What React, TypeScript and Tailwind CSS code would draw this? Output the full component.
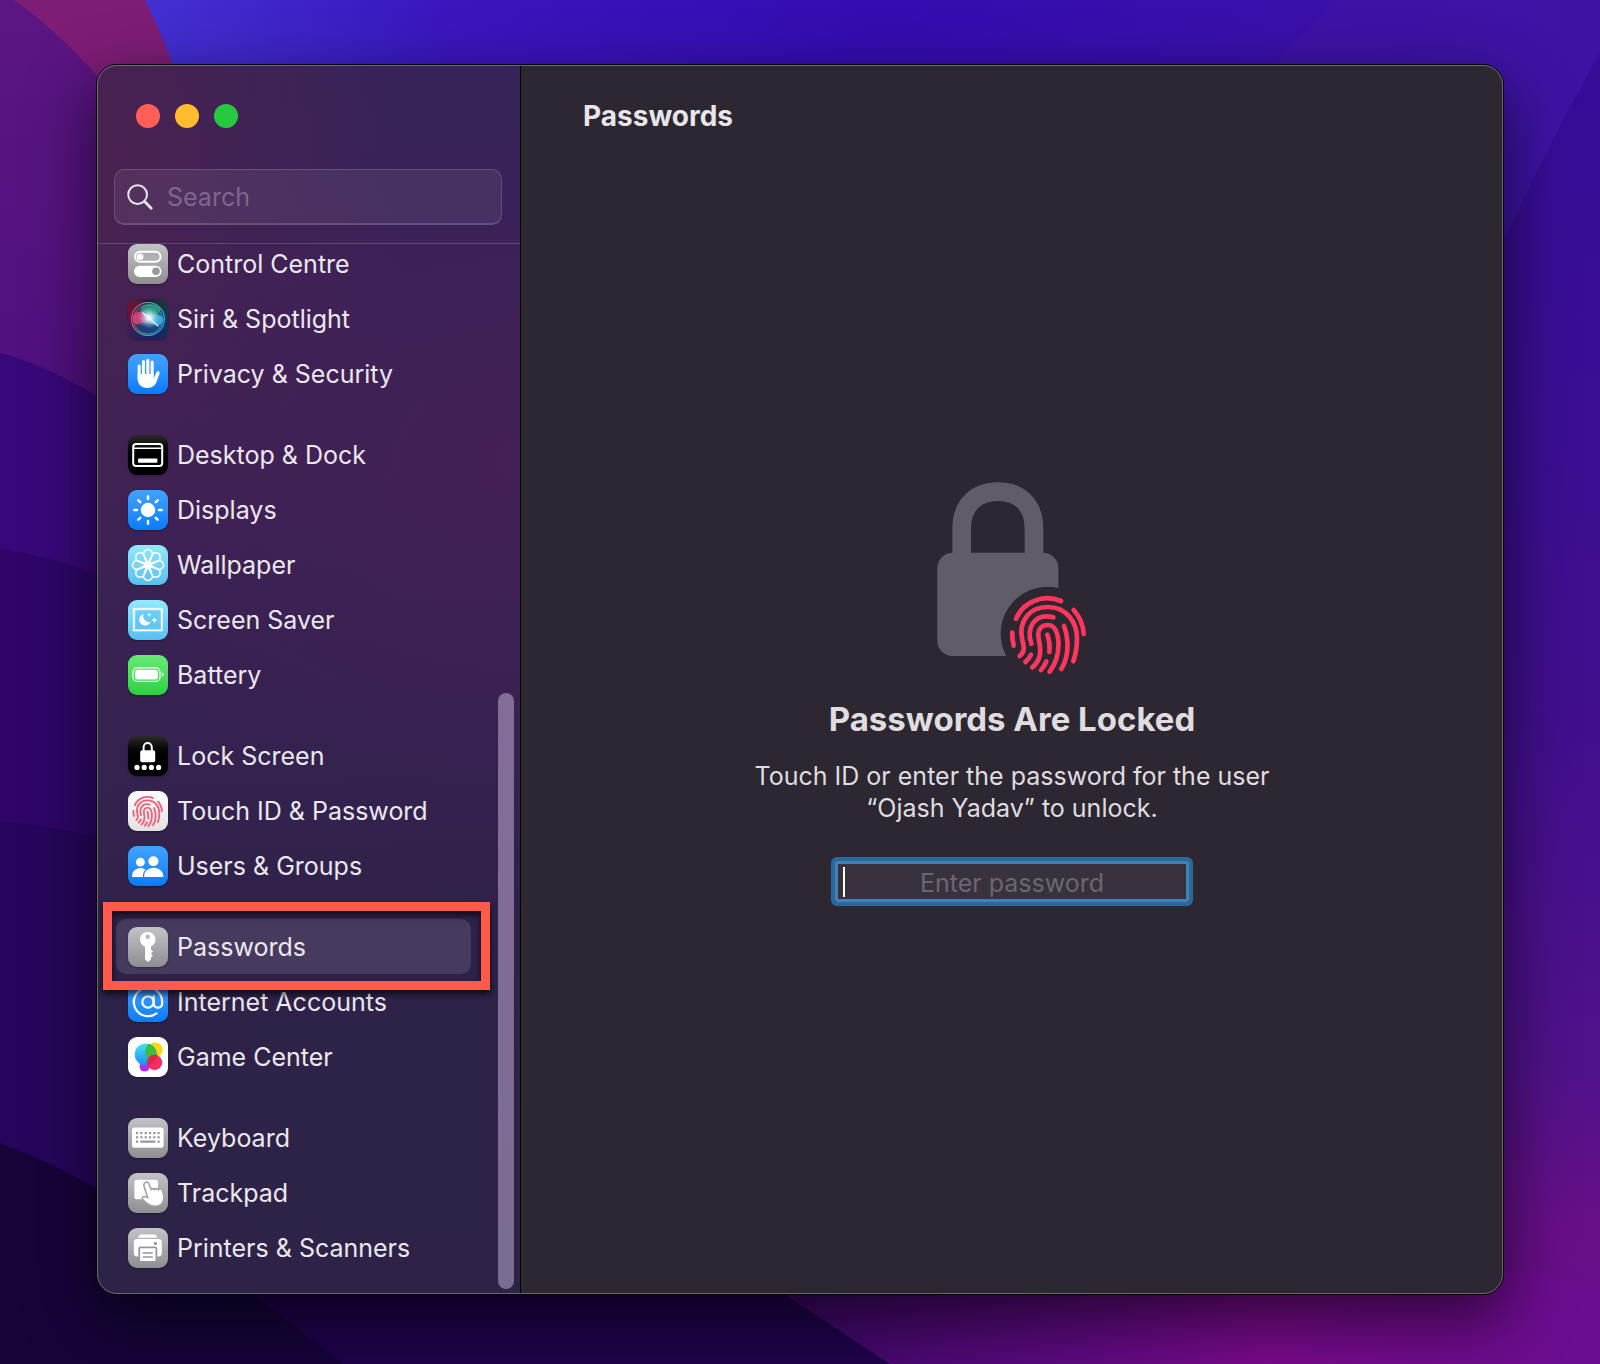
import type { ReactNode } from "react";
import { AtSign } from "lucide-react";

const FINGERPRINT = [
  "M349 475 C372 424 430 400 484 422",
  "M522 449 Q550 480 552 521",
  "M338 517 Q337 537 342 556",
  "M360 587 C376 574 374 560 368 540 C354 480 392 440 444 440 C500 440 532 485 532 535 C532 560 528 582 521 603",
  "M395 550 C380 505 402 456 461 471",
  "M377 605 Q388 597 394 583",
  "M398 621 C425 600 425 570 417 535 C411 505 428 494 444 494 C465 494 473 513 476 540 C479 580 468 610 450 634",
  "M443 523 Q452 548 449 575",
  "M424 629 Q434 618 440 603",
  "M493 497 C509 540 507 590 485 626",
];

function Fingerprint() {
  return (
    <>
      {FINGERPRINT.map((d) => (
        <path key={d} d={d} fill="none" strokeLinecap="round" />
      ))}
    </>
  );
}

const TILE = {
  gray: "bg-linear-to-b from-[#c3c3c7] to-[#8e8e93]",
  blue: "bg-linear-to-b from-[#41a3ff] to-[#077cff]",
  black: "bg-linear-to-b from-[#2c2c2c] to-black to-60%",
  sky: "bg-linear-to-b from-[#91eafd] to-[#56bff0]",
  green: "bg-linear-to-b from-[#66ea76] to-[#2bd041]",
  white: "bg-linear-to-b from-white to-[#e2e2e2]",
  plain: "bg-white",
  siri: "bg-linear-to-r from-[#7a0b33] via-[#2a1a3c] to-[#0b3f3f]",
};

function Tile({ tone, children }: { tone: keyof typeof TILE; children: ReactNode }) {
  return (
    <span className={`flex size-10 shrink-0 items-center justify-center overflow-hidden rounded-[9px] shadow-[0_1px_2px_rgba(0,0,0,0.35)] ${TILE[tone]}`}>
      <svg viewBox="0 0 40 40" className="size-10" fill="none" aria-hidden="true">
        {children}
      </svg>
    </span>
  );
}

const ControlCentreIcon = () => (
  <Tile tone="gray">
    <rect x="7" y="7.8" width="25.5" height="10" rx="5" stroke="#fff" strokeWidth="2" fill="#b0b0b4" />
    <circle cx="12" cy="12.8" r="3.4" fill="#fff" />
    <rect x="6" y="21.8" width="27.5" height="11.2" rx="5.6" fill="#fff" />
    <circle cx="28" cy="27.3" r="3.8" fill="#98989c" />
  </Tile>
);

const SiriIcon = () => (
  <Tile tone="siri">
    <defs>
      <radialGradient id="siri-orb" cx="0.5" cy="0.5" r="0.5">
        <stop offset="0" stopColor="#fff" />
        <stop offset="0.25" stopColor="#d9f3fb" stopOpacity="0.9" />
        <stop offset="1" stopColor="#8bd" stopOpacity="0" />
      </radialGradient>
      <linearGradient id="siri-ring" x1="0" y1="0.4" x2="1" y2="0.7">
        <stop offset="0" stopColor="#d0507a" />
        <stop offset="0.4" stopColor="#4fb596" />
        <stop offset="1" stopColor="#2a9fe8" />
      </linearGradient>
      <linearGradient id="siri-base" x1="0" y1="0" x2="0" y2="1">
        <stop offset="0.3" stopColor="#0d2a86" stopOpacity="0" />
        <stop offset="1" stopColor="#12246e" stopOpacity="0.8" />
      </linearGradient>
      <radialGradient id="siri-globe" cx="0.62" cy="0.5" r="0.65">
        <stop offset="0" stopColor="#1f8a78" />
        <stop offset="0.6" stopColor="#1a4a66" />
        <stop offset="1" stopColor="#4a2050" />
      </radialGradient>
    </defs>
    <rect width="40" height="40" fill="url(#siri-base)" />
    <circle cx="20" cy="20" r="16" fill="url(#siri-globe)" />
    <ellipse cx="22.5" cy="11" rx="10" ry="6" fill="#1fae78" fillOpacity="0.7" />
    <ellipse cx="12.5" cy="19.5" rx="8" ry="7" fill="#e0407a" fillOpacity="0.9" />
    <ellipse cx="28" cy="21" rx="7.5" ry="5.5" fill="#3fb0ec" fillOpacity="0.9" />
    <path d="M8 26 C16 21 24 26 33 27 C28 36 13 37 8 26Z" fill="#1c3c86" fillOpacity="0.7" />
    <circle cx="21" cy="18.5" r="11" fill="url(#siri-orb)" />
    <path d="M15 14 L30 27" stroke="#fff" strokeWidth="1.6" strokeOpacity="0.75" strokeLinecap="round" />
    <circle cx="20" cy="20" r="16.5" stroke="url(#siri-ring)" strokeWidth="1.2" />
    <circle cx="20" cy="20.5" r="14.5" stroke="url(#siri-ring)" strokeWidth="0.8" />
  </Tile>
);

const HandIcon = () => (
  <Tile tone="blue">
    <g stroke="#fff" strokeLinecap="round" strokeWidth="3.1">
      <path d="M11.2 12 V25" />
      <path d="M15.5 7.6 V22" />
      <path d="M19.8 6.4 V22" />
      <path d="M24.1 8 V22" />
    </g>
    <path d="M9.7 20 H25.6 V24.5 L28.3 18.4 C29 16.7 32.3 16.6 31.6 19.4 L28.6 27.6 C27.2 31.7 24.2 34 19.4 34 C13.3 34 9.7 30.6 9.7 24.5 Z" fill="#fff" />
  </Tile>
);

const DesktopIcon = () => (
  <Tile tone="black">
    <rect x="5.2" y="9" width="29" height="22" rx="3" stroke="#fff" strokeWidth="2" />
    <path d="M5 13.3 H34" stroke="#fff" strokeWidth="1.4" />
    <rect x="10" y="23.4" width="19.4" height="4.4" rx="1" fill="#fff" />
  </Tile>
);

const RAYS = [0, 45, 90, 135, 180, 225, 270, 315];

const DisplaysIcon = () => (
  <Tile tone="blue">
    <circle cx="20" cy="20" r="7.2" fill="#fff" />
    {RAYS.map((a) => (
      <path key={a} d="M20 9 V6.2" stroke="#fff" strokeWidth="2.4" strokeLinecap="round" transform={`rotate(${a} 20 20)`} />
    ))}
  </Tile>
);

const WallpaperIcon = () => (
  <Tile tone="sky">
    {RAYS.map((a) => (
      <path key={a} d="M20 22.5 L16.2 11.2 A4.4 4.4 0 1 1 23.8 11.2 Z" stroke="#fff" strokeWidth="1.5" strokeLinejoin="round" transform={`rotate(${a} 20 20)`} />
    ))}
  </Tile>
);

const ScreenSaverIcon = () => (
  <Tile tone="sky">
    <rect x="5.8" y="8.8" width="28" height="21.6" stroke="#fff" strokeWidth="1.8" />
    <rect x="8" y="11" width="23.6" height="17.2" fill="#55bff0" fillOpacity="0.5" />
    <path d="M15.6 14 A5.9 5.9 0 1 0 22.6 22 A6 6 0 0 1 15.6 14Z" fill="#fff" />
    <path d="M26.3 17 L27.2 19.3 L29.5 20.2 L27.2 21.1 L26.3 23.4 L25.4 21.1 L23.1 20.2 L25.4 19.3Z" fill="#fff" />
    <path d="M21.3 12.6 L21.9 14.2 L23.5 14.8 L21.9 15.4 L21.3 17 L20.7 15.4 L19.1 14.8 L20.7 14.2Z" fill="#fff" />
  </Tile>
);

const BatteryIcon = () => (
  <Tile tone="green">
    <rect x="5" y="12.8" width="27" height="13.6" rx="4.4" stroke="#fff" strokeOpacity="0.85" strokeWidth="1.4" />
    <rect x="7" y="14.8" width="23" height="9.6" rx="2.6" fill="#fff" />
    <path d="M33.8 17.2 C36.4 18.2 36.4 21 33.8 22Z" fill="#fff" fillOpacity="0.85" />
  </Tile>
);

const LockScreenIcon = () => (
  <Tile tone="black">
    <rect x="12.2" y="14.2" width="15" height="12" rx="2" fill="#fff" />
    <path d="M15.6 15 V11.4 C15.6 5.6 23.8 5.6 23.8 11.4 V15" stroke="#fff" strokeWidth="2" />
    {[9, 16.2, 23.4, 30.6].map((x) => (
      <circle key={x} cx={x} cy="31.4" r="2.6" fill="#fff" />
    ))}
  </Tile>
);

const TouchIdIcon = () => (
  <Tile tone="white">
    <g transform="translate(-39.8 -49.4) scale(0.1337)" stroke="#f4607c" strokeWidth="14">
      <Fingerprint />
    </g>
  </Tile>
);

const UsersIcon = () => (
  <Tile tone="blue">
    <circle cx="12.4" cy="16.2" r="4.4" fill="#fff" />
    <path d="M4 31 C3.6 25.5 8 22 12.4 22 C14.6 22 16.4 22.6 17.7 23.6 C15.6 25.4 14.7 28 15 31Z" fill="#fff" />
    <circle cx="25.4" cy="15.2" r="5" fill="#fff" />
    <path d="M16.2 31 C15.6 25.3 20.4 21.8 25.6 21.8 C30.8 21.8 35.8 25.3 35.2 31Z" fill="#fff" />
  </Tile>
);

const KeyIcon = () => (
  <Tile tone="gray">
    <path fillRule="evenodd" d="M19.7 5 C24.3 5 27.5 8.3 27.5 12.6 C27.5 15.8 25.6 18.4 23 19.6 V22.4 L25 24.2 L23 26.4 L24.8 28.6 L23 30.6 V32.2 L20 35 L17 32.2 V19.8 C13.8 18.6 12 15.8 12 12.6 C12 8.3 15.2 5 19.7 5Z M19.7 7.6 A2.2 2.2 0 1 0 19.7 12 A2.2 2.2 0 1 0 19.7 7.6Z" fill="#fff" />
  </Tile>
);

const InternetIcon = () => (
  <Tile tone="blue">
    <AtSign x="3" y="3" width="34" height="34" color="#fff" strokeWidth={1.6} />
  </Tile>
);

const GameCenterIcon = () => (
  <Tile tone="plain">
    <defs>
      <linearGradient id="gc-cyan" x1="0" y1="0" x2="0" y2="1">
        <stop offset="0" stopColor="#4ce1f5" />
        <stop offset="1" stopColor="#1b8df0" />
      </linearGradient>
      <clipPath id="gc-clip">
        <circle cx="17.8" cy="17.4" r="11" />
      </clipPath>
    </defs>
    <circle cx="16.6" cy="29.6" r="5" fill="#b02df5" />
    <circle cx="27.2" cy="12.8" r="7.4" fill="#fbd70e" />
    <circle cx="17.8" cy="17.4" r="11" fill="url(#gc-cyan)" />
    <ellipse cx="25" cy="14.8" rx="8" ry="9.4" fill="#3dbb45" clipPath="url(#gc-clip)" />
    <circle cx="26.6" cy="25.4" r="7.7" fill="#fb2b63" />
    <circle cx="26.6" cy="25.4" r="7.7" fill="#d9273a" fillOpacity="0.75" clipPath="url(#gc-clip)" />
  </Tile>
);

const KeyboardIcon = () => (
  <Tile tone="gray">
    <rect x="4" y="9.6" width="31.6" height="20.2" rx="2.4" fill="#fff" />
    {[14, 18.2].map((y) =>
      [8, 12.3, 16.6, 20.9, 25.2, 29.5].map((x) => <rect key={`${x}-${y}`} x={x} y={y} width="2.2" height="2.2" fill="#98989c" />),
    )}
    <path d="M8 23.6 H10.2 M12.3 23.6 H27.4 M29.5 23.6 H31.7" stroke="#98989c" strokeWidth="2.2" />
  </Tile>
);

const TrackpadIcon = () => (
  <Tile tone="gray">
    <rect x="6.4" y="6.8" width="23.6" height="19.4" rx="2" fill="#fff" />
    <path
      d="M17.3 9.6 C18.7 8.6 20.4 9.3 21 11 L23.2 16.4 C24 15.2 25.8 15.4 26.5 16.6 C27.5 15.2 29.6 15.4 30.2 16.8 C31.3 15 34 15.2 34.4 17.6 C35.6 21 36.4 24.8 35.2 28 C33.8 31.8 30.2 33.6 26 33.2 C21.4 32.8 17.4 29.6 14.7 26.6 C13.4 25.2 14.8 23.2 16.6 23.6 L19.6 24.6 L16 13 C15.6 11.4 16 10.4 17.3 9.6Z"
      fill="#fff"
      stroke="#a2a2a6"
      strokeWidth="1.6"
    />
  </Tile>
);

const PrinterIcon = () => (
  <Tile tone="gray">
    <path d="M10.4 9.8 C10.4 7.8 11.6 6.6 13.4 6.6 H26 C27.8 6.6 29 7.8 29 9.8Z" fill="#fff" />
    <path d="M9.4 11 H30.2 C32.6 11 33.8 12.2 33.8 14.4 V25 C33.8 27.4 32.8 28.4 30.4 28.4 H9.2 C6.8 28.4 5.8 27.4 5.8 25 V14.4 C5.8 12.2 7 11 9.4 11Z" fill="#fff" />
    <circle cx="27.4" cy="15.4" r="1.6" fill="#98989c" />
    <rect x="11.2" y="19.4" width="17.2" height="14.6" rx="1.4" fill="#fff" stroke="#98989c" strokeWidth="1.8" />
    <path d="M14.8 25 H24.8 M14.8 29 H24.8" stroke="#98989c" strokeWidth="1.6" />
  </Tile>
);

type Item = { label: string; icon: ReactNode; selected?: boolean };

const GROUPS: Item[][] = [
  [
    { label: "Control Centre", icon: <ControlCentreIcon /> },
    { label: "Siri & Spotlight", icon: <SiriIcon /> },
    { label: "Privacy & Security", icon: <HandIcon /> },
  ],
  [
    { label: "Desktop & Dock", icon: <DesktopIcon /> },
    { label: "Displays", icon: <DisplaysIcon /> },
    { label: "Wallpaper", icon: <WallpaperIcon /> },
    { label: "Screen Saver", icon: <ScreenSaverIcon /> },
    { label: "Battery", icon: <BatteryIcon /> },
  ],
  [
    { label: "Lock Screen", icon: <LockScreenIcon /> },
    { label: "Touch ID & Password", icon: <TouchIdIcon /> },
    { label: "Users & Groups", icon: <UsersIcon /> },
  ],
  [
    { label: "Passwords", icon: <KeyIcon />, selected: true },
    { label: "Internet Accounts", icon: <InternetIcon /> },
    { label: "Game Center", icon: <GameCenterIcon /> },
  ],
  [
    { label: "Keyboard", icon: <KeyboardIcon /> },
    { label: "Trackpad", icon: <TrackpadIcon /> },
    { label: "Printers & Scanners", icon: <PrinterIcon /> },
  ],
];

function SidebarItem({ label, icon, selected }: Item) {
  return (
    <li className="relative">
      <button
        type="button"
        aria-current={selected ? "page" : undefined}
        className={`flex h-[55px] w-full items-center gap-[9px] rounded-[10px] px-3 text-left text-[25px] text-[#ebe8ee] ${selected ? "bg-[#463a5e]" : ""}`}
      >
        {icon}
        <span className="pt-0.5 whitespace-nowrap">{label}</span>
      </button>
      {selected && (
        <div className="pointer-events-none absolute -top-[17px] -right-[19px] -bottom-4 -left-[13px] z-10 border-[9px] border-[#ff5a4a] drop-shadow-[0_4px_3px_rgba(0,0,0,0.7)]" />
      )}
    </li>
  );
}

function Sidebar() {
  return (
    <aside className="relative flex w-[424px] shrink-0 flex-col border-r border-black bg-[radial-gradient(ellipse_320px_460px_at_0%_8%,#4a2250_0%,transparent_100%),radial-gradient(ellipse_460px_340px_at_100%_32%,#432055_0%,transparent_100%),linear-gradient(178deg,#352359_0%,#38225a_20%,#3b2256_36%,#352250_55%,#2e2248_72%,#2e2347_100%)]">
      <div className="flex gap-[15px] px-[39px] pt-[39px]">
        <button type="button" aria-label="Close" className="size-6 rounded-full bg-[#ff5f57]" />
        <button type="button" aria-label="Minimise" className="size-6 rounded-full bg-[#febc2e]" />
        <button type="button" aria-label="Zoom" className="size-6 rounded-full bg-[#28c840]" />
      </div>
      <div className="border-b border-[#61467a] pt-[41px] pr-[18px] pb-[18px] pl-[17px]">
        <label className="flex h-14 items-center gap-[14px] rounded-[10px] border border-b-2 border-white/15 bg-white/[0.07] px-3">
          <svg viewBox="0 0 26 26" className="size-[26px] shrink-0" fill="none" stroke="#e8e4ec" strokeLinecap="round" aria-hidden="true">
            <circle cx="10.6" cy="10.6" r="9.4" strokeWidth="2" />
            <path d="M17.6 17.6 L24.2 24.2" strokeWidth="2.8" />
          </svg>
          <input
            type="search"
            aria-label="Search"
            placeholder="Search"
            className="w-full min-w-0 bg-transparent pt-0.5 text-[25px] text-[#ebe8ee] outline-none placeholder:text-[#80668e]"
          />
        </label>
      </div>
      <nav aria-label="Settings" className="-mt-2 flex flex-col gap-[26px] pr-[49px] pb-[19px] pl-[19px]">
        {GROUPS.map((group) => (
          <ul key={group[0].label}>
            {group.map((item) => (
              <SidebarItem key={item.label} {...item} />
            ))}
          </ul>
        ))}
      </nav>
      <div className="absolute right-1.5 bottom-[5px] h-[596px] w-4 rounded-full bg-linear-to-b from-[#846c99] to-[#7a6c93]" />
    </aside>
  );
}

function LockedIllustration() {
  return (
    <svg viewBox="112 65 450 576" className="h-48 w-[150px]" aria-hidden="true">
      <defs>
        <mask id="badge-cutout" maskUnits="userSpaceOnUse" x="0" y="0" width="700" height="700">
          <rect width="700" height="700" fill="#fff" />
          <circle cx="444" cy="520" r="141" fill="#000" />
        </mask>
      </defs>
      <g mask="url(#badge-cutout)">
        <path d="M186 290 V205 C186 132 232 94 295 94 S403 132 403 205 V290" fill="none" stroke="#615d67" strokeWidth="56" />
        <rect x="113" y="277" width="363" height="310" rx="46" fill="#615d67" />
      </g>
      <g stroke="#ff375f" strokeWidth="14">
        <Fingerprint />
      </g>
    </svg>
  );
}

function PasswordsPane() {
  return (
    <main className="flex flex-1 flex-col bg-[#2d2731]">
      <h1 className="px-[62px] pt-[33px] text-[28px] leading-9 font-bold text-[#e8e6e9]">Passwords</h1>
      <section className="flex flex-1 flex-col items-center pt-[348px] text-center text-[#dfdde0]">
        <LockedIllustration />
        <h2 className="mt-[25px] text-[33px] leading-10 font-bold">Passwords Are Locked</h2>
        <p className="mt-[21px] text-[25px] leading-8">
          Touch ID or enter the password for the user
          <br />
          “Ojash Yadav” to unlock.
        </p>
        <div className="relative mt-[33px] w-[362px]">
          <input
            type="password"
            aria-label="Enter password"
            placeholder="Enter password"
            className="block h-[49px] w-full rounded-md border-4 border-[#2a699c] bg-[#39323c] pt-0.5 text-center text-[25px] text-white shadow-[inset_0_0_0_3px_#4380b5] outline-none placeholder:text-[#6b6770]"
          />
          <span className="absolute top-[10px] left-3 h-[30px] w-0.5 bg-white" />
        </div>
      </section>
    </main>
  );
}

function Wallpaper() {
  return (
    <svg viewBox="0 0 1600 1364" preserveAspectRatio="none" className="absolute inset-0 size-full" aria-hidden="true">
      <defs>
        <linearGradient id="wp-blue" x1="0" y1="0" x2="1" y2="0">
          <stop offset="0.09" stopColor="#4230d2" />
          <stop offset="0.28" stopColor="#3a16bd" />
          <stop offset="0.55" stopColor="#340cb0" />
          <stop offset="1" stopColor="#3e13a6" />
        </linearGradient>
        <linearGradient id="wp-right" x1="0" y1="0" x2="0" y2="1">
          <stop offset="0.04" stopColor="#360d98" />
          <stop offset="0.5" stopColor="#400f8e" />
          <stop offset="0.78" stopColor="#50128a" />
          <stop offset="0.9" stopColor="#680f88" />
          <stop offset="1" stopColor="#690d90" />
        </linearGradient>
        <linearGradient id="wp-violet" x1="0" y1="0" x2="0" y2="1">
          <stop offset="0" stopColor="#5b1682" />
          <stop offset="1" stopColor="#50107f" />
        </linearGradient>
        <linearGradient id="wp-bottom" x1="0" y1="0" x2="1" y2="0">
          <stop offset="0" stopColor="#3b0767" />
          <stop offset="0.38" stopColor="#5d0a80" />
          <stop offset="0.6" stopColor="#7a0a8c" />
          <stop offset="1" stopColor="#690d90" />
        </linearGradient>
      </defs>
      <rect width="1600" height="1364" fill="url(#wp-blue)" />
      <path d="M1337 0 L1270 66 V300 H1480 L1600 52 V0Z" fill="#4014a4" fillOpacity="0.6" />
      <path d="M1600 52 Q1545 150 1480 290 V1364 H1600Z" fill="url(#wp-right)" />
      <path d="M0 0 H145 Q165 40 178 80 L300 400 H0Z" fill="#7d1d76" />
      <path d="M0 0 H14 Q60 32 110 90 V420 H0Z" fill="url(#wp-violet)" />
      <path d="M0 353 Q50 366 110 404 V700 H0Z" fill="#38087a" />
      <path d="M0 548 Q50 556 110 580 V900 H0Z" fill="#2f0668" />
      <path d="M0 821 Q50 826 110 840 V1240 H0Z" fill="#26065c" />
      <path d="M140 1200 V1364 H900 L760 1240Z" fill="#1f034c" />
      <path d="M0 1143 Q60 1165 130 1208 L255 1296 L343 1364 H0Z" fill="#16043a" />
      <path d="M760 1260 L787 1296 L890 1364 H1600 V1290 L1480 1260Z" fill="url(#wp-bottom)" />
    </svg>
  );
}

export default function App() {
  return (
    <div className="relative isolate min-h-screen overflow-hidden bg-[#340cb0] px-24 pt-16 pb-[68px] font-['Inter',sans-serif]">
      <Wallpaper />
      <div className="relative rounded-[21px] border border-black bg-[#2d2731] shadow-[0_24px_64px_2px_rgba(0,0,0,0.6)]">
        <div className="flex overflow-hidden rounded-[20px]">
          <Sidebar />
          <PasswordsPane />
        </div>
        <div className="pointer-events-none absolute inset-0 rounded-[20px] border border-white/30" />
      </div>
    </div>
  );
}
